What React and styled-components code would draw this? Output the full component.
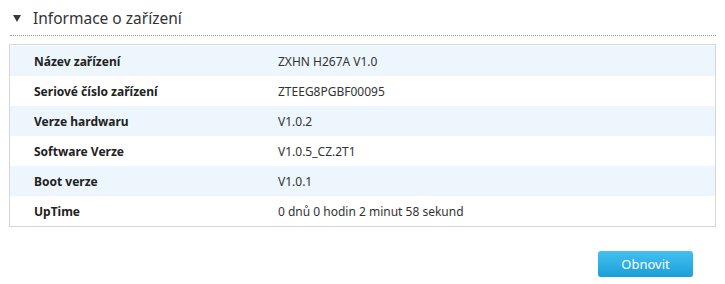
import React from "react";
import styled, { createGlobalStyle } from "styled-components";

const GlobalStyle = createGlobalStyle`
  body {
    margin: 0;
    background: #fff;
    font-family: "Noto Sans", "Open Sans", sans-serif;
    color: #333;
  }
`;

const Page = styled.div`
  width: 725px;
  padding: 6px 9px 0 9px;
  box-sizing: border-box;
`;

const Header = styled.div`
  display: flex;
  align-items: center;
  height: 24px;
  padding-left: 3px;
  padding-bottom: 5px;
  border-bottom: 1px dotted #9a9a9a;
  margin-left: 1px;
`;

const Arrow = styled.span`
  width: 0;
  height: 0;
  border-left: 4.5px solid transparent;
  border-right: 4.5px solid transparent;
  border-top: 7px solid #3a3a3a;
  margin-right: 12px;
  margin-top: 1px;
`;

const Title = styled.h2`
  margin: 0;
  font-size: 15.5px;
  font-weight: 400;
  color: #333;
`;

const Table = styled.div`
  margin-top: 8px;
  border: 1px solid #d6d6d6;
  width: 707px;
  box-sizing: border-box;
  padding: 1px 0 0;
`;

const Row = styled.div`
  display: grid;
  grid-template-columns: 244px 1fr;
  align-items: center;
  height: 30px;
  padding-left: 24px;
  background: ${({ striped }) => (striped ? "#eef6fd" : "#fff")};
  font-size: 12px;
`;

const Label = styled.span`
  font-weight: 700;
  color: #222;
`;

const Value = styled.span`
  color: #333;
`;

const Footer = styled.div`
  display: flex;
  justify-content: flex-end;
  padding-right: 23px;
  margin-top: 24px;
`;

const Button = styled.button`
  width: 95px;
  height: 26px;
  border: none;
  border-radius: 3px;
  background: linear-gradient(#43c1f0, #1b9ed8);
  color: #fff;
  font-family: "Noto Sans", "Open Sans", sans-serif;
  font-size: 13px;
  cursor: pointer;
  box-shadow: 0 1px 1px rgba(0, 0, 0, 0.15);
`;

const rows = [
  ["Název zařízení", "ZXHN H267A V1.0"],
  ["Seriové číslo zařízení", "ZTEEG8PGBF00095"],
  ["Verze hardwaru", "V1.0.2"],
  ["Software Verze", "V1.0.5_CZ.2T1"],
  ["Boot verze", "V1.0.1"],
  ["UpTime", "0 dnů 0 hodin 2 minut 58 sekund"],
];

const App = () => (
  <>
    <GlobalStyle />
    <Page>
      <Header>
        <Arrow />
        <Title>Informace o zařízení</Title>
      </Header>
      <Table>
        {rows.map(([label, value], i) => (
          <Row key={label} striped={i % 2 === 0}>
            <Label>{label}</Label>
            <Value>{value}</Value>
          </Row>
        ))}
      </Table>
      <Footer>
        <Button>Obnovit</Button>
      </Footer>
    </Page>
  </>
);

export default App;
